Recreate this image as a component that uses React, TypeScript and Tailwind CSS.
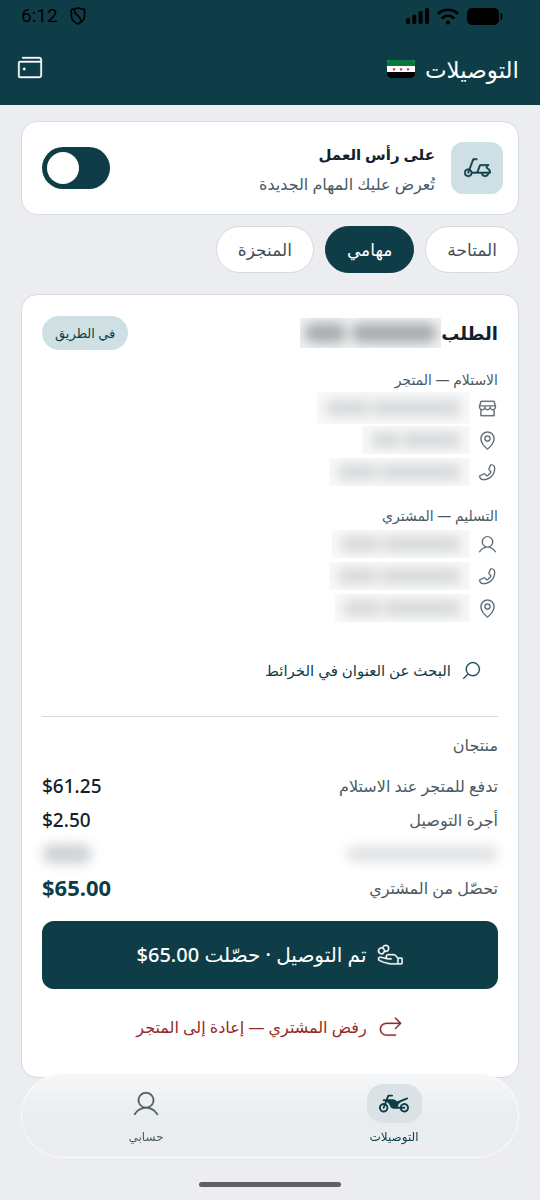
import { useState } from "react";
import type { ReactNode } from "react";
import type { IconType } from "react-icons";
import {
  PiArrowUUpLeftLight,
  PiHandCoinsLight,
  PiMagnifyingGlassLight,
  PiMapPinLight,
  PiMopedLight,
  PiMotorcycleFill,
  PiPhoneLight,
  PiStorefrontLight,
  PiUserLight,
  PiWalletLight,
} from "react-icons/pi";

const TABS = ["المتاحة", "مهامي", "المنجزة"];

interface Contact {
  icon: IconType;
  flip?: boolean;
  label: string;
  // size of the hidden value
  size: string;
}

const PICKUP: Contact[] = [
  { icon: PiStorefrontLight, label: "اسم المتجر", size: "w-[153px] h-8" },
  { icon: PiMapPinLight, label: "عنوان المتجر", size: "w-[108px] h-7" },
  { icon: PiPhoneLight, flip: true, label: "هاتف المتجر", size: "w-[141px] h-7" },
];

const DROPOFF: Contact[] = [
  { icon: PiUserLight, label: "اسم المشتري", size: "w-[138px] h-7" },
  { icon: PiPhoneLight, flip: true, label: "هاتف المشتري", size: "w-[141px] h-7" },
  { icon: PiMapPinLight, label: "عنوان المشتري", size: "w-[135px] h-7" },
];

function StatusBar() {
  return (
    <div dir="ltr" className="flex h-8 items-center justify-between pr-[37px] pl-[21px] text-black">
      <div className="flex items-center gap-3">
        <span className="font-[Roboto] text-[19px] leading-6">6:12</span>
        <svg viewBox="0 0 16 18" className="h-[18px] w-4" fill="none" stroke="currentColor" strokeWidth="1.6">
          <path d="M8 1 14.6 2.6V9c0 3.600-2.600 6.200-6.600 8C4 15.200 1.400 12.600 1.400 9V2.600z" strokeLinejoin="round" />
          <path d="M4.800 2.200c-.8 3.400.6 4.600 3 6.400 2.600 2 3.600 4 2.400 7" />
        </svg>
      </div>
      <div className="flex items-center gap-2">
        <svg viewBox="0 0 23 16" className="h-4 w-[23px]" fill="currentColor">
          <rect x="0" y="10" width="4" height="6" rx="1.500" />
          <rect x="6.300" y="6.500" width="4" height="9.500" rx="1.500" />
          <rect x="12.600" y="3" width="4" height="13" rx="1.500" />
          <rect x="19" y="0" width="4" height="16" rx="1.500" />
        </svg>
        <svg viewBox="0 0 22 17" className="h-[17px] w-[22px]" fill="none" stroke="currentColor" strokeWidth="2.700" strokeLinecap="round">
          <path d="M1.600 5.200c5.400-4.600 13.400-4.600 18.800 0M5.600 9.800c3.200-2.600 7.600-2.600 10.800 0" />
          <circle cx="11" cy="14.600" r="2.100" fill="currentColor" stroke="none" />
        </svg>
        <svg viewBox="0 0 36 17" className="h-[17px] w-9" fill="currentColor">
          <rect width="32" height="17" rx="5" />
          <path d="M33.500 4.500c2.700.7 2.700 7.300 0 8z" />
        </svg>
      </div>
    </div>
  );
}

function Flag() {
  return (
    <svg viewBox="0 0 28 18" className="h-[18px] w-7 rounded-[3px]" role="img" aria-label="سوريا">
      <rect width="28" height="18" fill="#fff" />
      <rect width="28" height="6" fill="#057a3c" />
      <rect y="12" width="28" height="6" fill="#000" />
      {[7, 14, 21].map((x) => (
        <path
          key={x}
          transform={`translate(${x} 9.200)`}
          fill="#ce1126"
          d="M0-1.700.5-.5 1.700-.5.8.3 1.100 1.500 0 .8-1.100 1.500-.8.3-1.700-.5-.5-.5z"
        />
      ))}
    </svg>
  );
}

function Redacted({ size, dark = false }: { size: string; dark?: boolean }) {
  return (
    <span
      aria-hidden="true"
      className={`flex items-center justify-center overflow-hidden ${size} ${dark ? "gap-1 bg-[#f1f2f3] px-1" : "bg-[#f8f9f9] px-2"}`}
    >
      <span className={`flex-2 rounded-full blur-[6px] ${dark ? "h-5 bg-[#a8adb0]" : "h-4 bg-[#d6d8da]"}`} />
      <span className={`flex-1 rounded-full blur-[6px] ${dark ? "h-5 bg-[#a8adb0]" : "h-4 bg-[#d6d8da]"}`} />
    </span>
  );
}

function ContactBlock({ title, items }: { title: string; items: Contact[] }) {
  return (
    <section>
      <h3 className="h-6 text-sm leading-6 text-[#4b5a65]">{title}</h3>
      <ul>
        {items.map(({ icon: Icon, flip, label, size }) => (
          <li key={label} aria-label={label} className="flex h-8 items-center gap-[7px] text-[#4b5a65]">
            <Icon className={`size-[21px] stroke-3 ${flip ? "-scale-x-100" : ""}`} />
            <Redacted size={size} />
          </li>
        ))}
      </ul>
    </section>
  );
}

function AmountRow({ label, children }: { label: string; children: ReactNode }) {
  return (
    <div className="flex h-[34px] items-center justify-between">
      <dt className="text-base leading-6 text-[#4b5a65]">{label}</dt>
      <dd dir="ltr" className="text-[19px] leading-6 font-medium text-[#12212a]">
        {children}
      </dd>
    </div>
  );
}

export default function App() {
  const [onDuty, setOnDuty] = useState(true);
  const [tab, setTab] = useState(1);

  return (
    <div
      dir="rtl"
      lang="ar"
      className="min-h-screen bg-[#ecedf1] font-['Noto_Sans','DejaVu_Sans',sans-serif] text-[#12212a]"
    >
      <header className="bg-[#0f3d47] text-white">
        <StatusBar />
        <div className="flex h-[73px] items-center justify-between pr-[21px] pl-[15px]">
          <div className="flex items-center gap-[10px]">
            <h1 className="text-[23px] leading-8 font-medium">التوصيلات</h1>
            <Flag />
          </div>
          <button type="button" aria-label="المحفظة">
            <PiWalletLight className="size-[31px] -scale-x-100 stroke-3" />
          </button>
        </div>
      </header>

      <main className="px-[21px] pt-4 pb-28">
        <section className="flex h-[94px] items-center rounded-2xl border border-[#d3dae0] bg-white pr-[15px] pl-5">
          <span className="flex size-[52px] items-center justify-center rounded-xl bg-[#cee0e4] text-[#0f3d47]">
            <PiMopedLight className="size-[27px] -scale-x-100 stroke-6" />
          </span>
          <div className="mr-4 flex-1">
            <h2 id="duty-label" className="text-[15px] leading-8 font-bold">
              على رأس العمل
            </h2>
            <p className="text-base leading-7 text-[#4b5a65]">تُعرض عليك المهام الجديدة</p>
          </div>
          <label className="flex h-[42px] w-[68px] cursor-pointer items-center rounded-full bg-[#aab5bb] px-[5px] has-[:checked]:justify-end has-[:checked]:bg-[#0f3d47]">
            <input
              type="checkbox"
              role="switch"
              aria-labelledby="duty-label"
              checked={onDuty}
              onChange={(e) => setOnDuty(e.target.checked)}
              className="sr-only"
            />
            <span className="size-8 rounded-full bg-white" />
          </label>
        </section>

        <div role="tablist" className="mt-[11px] flex gap-[11px]">
          {TABS.map((name, i) => (
            <button
              key={name}
              type="button"
              role="tab"
              aria-selected={tab === i}
              onClick={() => setTab(i)}
              className={`h-[47px] rounded-full border px-[21px] text-[17px] leading-6 font-medium ${
                tab === i
                  ? "border-[#0f3d47] bg-[#0f3d47] text-white"
                  : "border-[#d3dae0] bg-white text-[#3f4e59]"
              }`}
            >
              {name}
            </button>
          ))}
        </div>

        <article className="mt-[21px] rounded-2xl border border-[#d3dae0] bg-white px-5 pt-[21px] pb-5">
          <div className="flex h-[34px] items-center justify-between">
            <h2 className="flex items-center text-lg leading-8 font-bold">
              الطلب
              <Redacted size="w-[141px] h-[30px]" dark />
            </h2>
            <span className="rounded-full bg-[#cee0e4] px-[13px] text-[13px] leading-[34px] text-[#0f3d47]">
              في الطريق
            </span>
          </div>

          <div className="mt-[18px] flex flex-col gap-4">
            <ContactBlock title="الاستلام — المتجر" items={PICKUP} />
            <ContactBlock title="التسليم — المشتري" items={DROPOFF} />
          </div>

          <a
            href="#maps"
            className="mt-[22px] inline-flex h-12 items-center gap-[10px] px-4 text-[15px] font-medium text-[#0f3d47]"
          >
            <PiMagnifyingGlassLight className="size-[21px] -scale-x-100 stroke-3" />
            البحث عن العنوان في الخرائط
          </a>

          <hr className="mt-[22px] border-[#d3dae0]" />

          <p className="mt-4 text-base leading-6 text-[#4b5a65]">منتجان</p>
          <dl className="mt-3">
            <AmountRow label="تدفع للمتجر عند الاستلام">$61.25</AmountRow>
            <AmountRow label="أجرة التوصيل">$2.50</AmountRow>
            <div aria-hidden="true" className="flex h-[34px] items-center justify-between">
              <span className="h-4 w-[152px] rounded-full bg-[#e0e2e4] blur-[6px]" />
              <span className="h-5 w-[50px] rounded-full bg-[#cfd3d6] blur-[6px]" />
            </div>
            <AmountRow label="تحصّل من المشتري">
              <strong className="text-[22px] font-bold text-[#0f3d47]">$65.00</strong>
            </AmountRow>
          </dl>

          <button
            type="button"
            className="mt-4 flex h-[68px] w-full items-center justify-center gap-[10px] rounded-xl bg-[#0f3d47] text-xl font-medium text-white"
          >
            <PiHandCoinsLight className="size-[27px] -scale-x-100 stroke-3" />
            <span>
              تم التوصيل · حصّلت <bdi dir="ltr">$65.00</bdi>
            </span>
          </button>
          <button
            type="button"
            className="mt-2 flex h-[60px] w-full items-center justify-center gap-[10px] text-base font-medium text-[#922b28]"
          >
            <PiArrowUUpLeftLight className="size-[27px] -scale-x-100 stroke-3" />
            رفض المشتري — إعادة إلى المتجر
          </button>
        </article>
      </main>

      <div className="fixed inset-x-0 bottom-0 px-[21px] pb-[13px]">
        <nav className="flex h-[85px] rounded-[42px] border border-white/70 bg-linear-to-b from-[#f6f7f8] via-[#e9edef] to-[#ecedf1] pt-[10px] text-xs leading-5">
          <a href="#deliveries" aria-current="page" className="flex flex-1 flex-col items-center gap-1 font-medium text-[#0f3d47]">
            <span className="flex h-[39px] w-[55px] items-center justify-center rounded-2xl bg-[#dbe2e5]">
              <PiMotorcycleFill className="size-[30px] -scale-x-100" />
            </span>
            التوصيلات
          </a>
          <a href="#account" className="flex flex-1 flex-col items-center gap-1 text-[#4b5a65]">
            <span className="flex h-[39px] w-[55px] items-center justify-center">
              <PiUserLight className="size-[30px] stroke-3" />
            </span>
            حسابي
          </a>
        </nav>
        <div className="mx-auto mt-6 h-[5px] w-[142px] rounded-full bg-[#5f5f60]" />
      </div>
    </div>
  );
}
